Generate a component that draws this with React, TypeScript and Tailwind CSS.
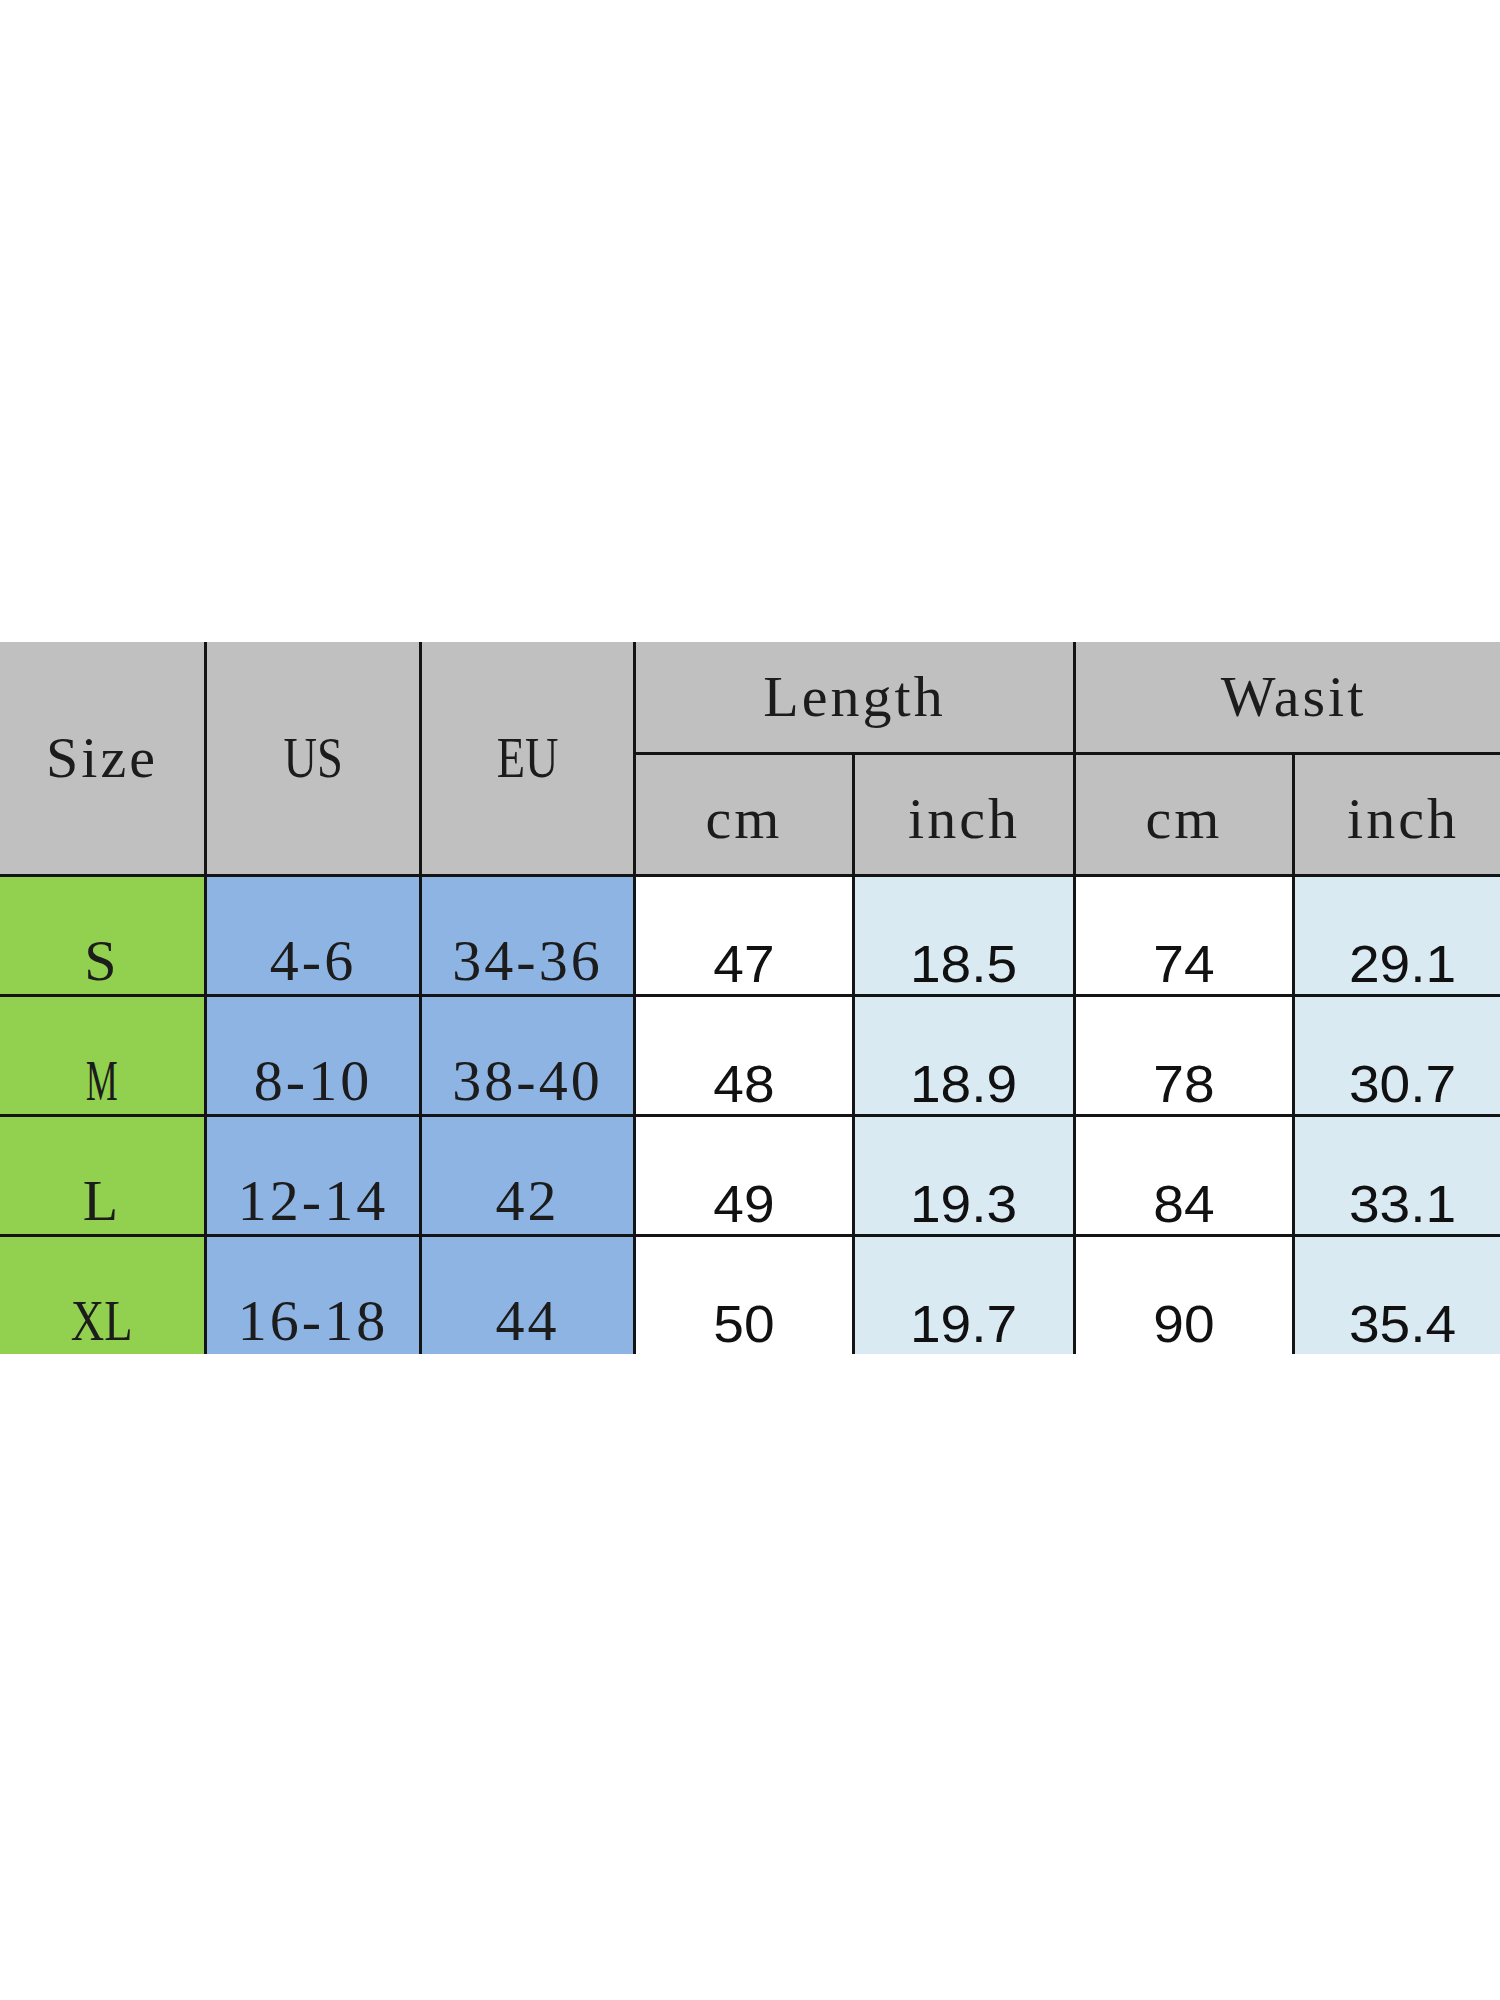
import clsx from "clsx";

const rows = [
  { size: "S", us: "4-6", eu: "34-36", lcm: "47", lin: "18.5", wcm: "74", win: "29.1" },
  { size: "M", us: "8-10", eu: "38-40", lcm: "48", lin: "18.9", wcm: "78", win: "30.7" },
  { size: "L", us: "12-14", eu: "42", lcm: "49", lin: "19.3", wcm: "84", win: "33.1" },
  { size: "XL", us: "16-18", eu: "44", lcm: "50", lin: "19.7", wcm: "90", win: "35.4" },
];

// SimSun-like header / size text: serif with extra tracking to look monospaced,
// caps squeezed since the original font draws them half-width
const Serif = ({ children, narrow }: { children: React.ReactNode; narrow?: "m" | "caps" }) => (
  <span
    className={clsx(
      "inline-block font-['Liberation_Serif','Times_New_Roman',serif] text-[58px] leading-none text-[#1c1c1c]",
      narrow === "m" && "scale-x-[0.62]",
      narrow === "caps" && "scale-x-[0.8]",
      narrow ? "tracking-normal" : "tracking-[3px]",
    )}
  >
    {children}
  </span>
);

const Num = ({ children }: { children: React.ReactNode }) => (
  <span className="inline-block scale-x-[1.06] font-['Liberation_Sans',Arial,sans-serif] text-[52px] leading-none text-[#111]">
    {children}
  </span>
);

const sizeNarrow = (s: string) => (s === "M" ? "m" : s === "XL" ? "caps" : undefined);

const App: React.FC = () => {
  return (
    <div className="min-h-[2000px] w-full bg-white pt-[642px]">
      <div className="w-[1500px] overflow-hidden">
        <div className="grid w-max grid-cols-[204px_212px_211px_216px_218px_216px_216px] grid-rows-[110px_119px_117px_117px_117px_117px] gap-[3px] bg-[#141414]">
          {/* header */}
          <div className="row-span-2 flex items-center justify-center bg-[#c0c0c0]">
            <Serif>Size</Serif>
          </div>
          <div className="row-span-2 flex items-center justify-center bg-[#c0c0c0]">
            <Serif narrow="caps">US</Serif>
          </div>
          <div className="row-span-2 flex items-center justify-center bg-[#c0c0c0]">
            <Serif narrow="caps">EU</Serif>
          </div>
          <div className="col-span-2 flex items-center justify-center bg-[#c0c0c0]">
            <Serif>Length</Serif>
          </div>
          <div className="col-span-2 flex items-center justify-center bg-[#c0c0c0]">
            <Serif>Wasit</Serif>
          </div>
          {["cm", "inch", "cm", "inch"].map((t, i) => (
            <div key={i} className="flex items-center justify-center bg-[#c0c0c0] pt-[8px]">
              <Serif>{t}</Serif>
            </div>
          ))}

          {/* body */}
          {rows.map((r) => (
            <div key={r.size} className="contents">
              <div className="flex items-end justify-center bg-[#92d050] pb-[4px]">
                <Serif narrow={sizeNarrow(r.size)}>{r.size}</Serif>
              </div>
              <div className="flex items-end justify-center bg-[#8db4e2] pb-[4px]">
                <Serif>{r.us}</Serif>
              </div>
              <div className="flex items-end justify-center bg-[#8db4e2] pb-[4px]">
                <Serif>{r.eu}</Serif>
              </div>
              <div className="flex items-end justify-center bg-white pb-[4px]">
                <Num>{r.lcm}</Num>
              </div>
              <div className="flex items-end justify-center bg-[#daeaf3] pb-[4px]">
                <Num>{r.lin}</Num>
              </div>
              <div className="flex items-end justify-center bg-white pb-[4px]">
                <Num>{r.wcm}</Num>
              </div>
              <div className="flex items-end justify-center bg-[#daeaf3] pb-[4px]">
                <Num>{r.win}</Num>
              </div>
            </div>
          ))}
        </div>
      </div>
    </div>
  );
};

export default App;
